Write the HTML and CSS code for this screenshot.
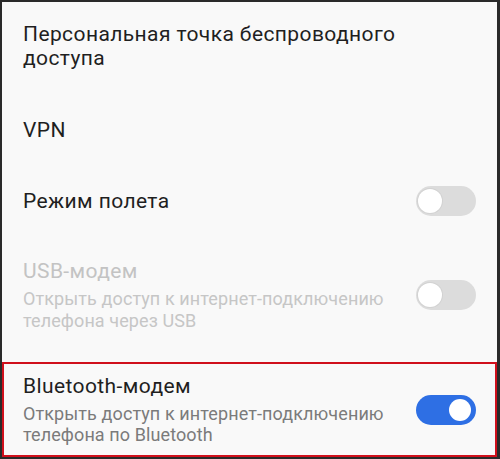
FILE: index.html
```html
<!DOCTYPE html>
<html lang="ru">
<head>
    <meta charset="UTF-8">
    <meta name="viewport" content="width=device-width, initial-scale=1.0">
    <title>Точка доступа и модем</title>
    <link rel="stylesheet" href="styles.css">
</head>
<body>
    <div class="screen">
        <div class="row row-first">
            <div class="text">
                <div class="title">Персональная точка беспроводного доступа</div>
            </div>
        </div>

        <div class="row row-vpn">
            <div class="text">
                <div class="title">VPN</div>
            </div>
        </div>

        <div class="row row-plane">
            <div class="text">
                <div class="title">Режим полета</div>
            </div>
            <div class="switch"><span class="knob"></span></div>
        </div>

        <div class="row row-usb disabled">
            <div class="text">
                <div class="title">USB-модем</div>
                <div class="subtitle">Открыть доступ к интернет-подключению телефона через USB</div>
            </div>
            <div class="switch"><span class="knob"></span></div>
        </div>

        <div class="row row-bt highlight">
            <div class="text">
                <div class="title">Bluetooth-модем</div>
                <div class="subtitle">Открыть доступ к интернет-подключению телефона по Bluetooth</div>
            </div>
            <div class="switch on"><span class="knob"></span></div>
        </div>
    </div>
</body>
</html>
```

FILE: styles.css
```css
html, body {
    margin: 0;
    padding: 0;
}

body {
    font-family: Roboto, "Noto Sans", Arial, sans-serif;
    background-color: #f9f9f9;
}

.screen {
    box-sizing: border-box;
    width: 500px;
    height: 459px;
    border: 2px solid #2a2a2a;
    border-right-width: 3px;
    background-color: #f9f9f9;
    display: flex;
    flex-direction: column;
    overflow: hidden;
}

.row {
    display: flex;
    align-items: center;
    justify-content: space-between;
    padding: 0 21px 0 21px;
}

.row-first { padding-top: 20px; padding-bottom: 24px; }
.row-vpn { padding-top: 24px; padding-bottom: 24px; }
.row-plane { padding-top: 20px; padding-bottom: 21px; }
.row-usb { padding-top: 22px; padding-bottom: 31px; }

.row-bt {
    flex: 1;
    padding-top: 8px;
    padding-bottom: 8px;
    padding-left: 19px;
    padding-right: 19px;
}

.highlight {
    border: 2px solid #d0101c;
}

.text {
    flex: 1;
    min-width: 0;
}

.title {
    font-size: 21px;
    line-height: 24px;
    letter-spacing: 0.4px;
    color: #1f1f1f;
    max-width: 390px;
}

.subtitle {
    font-size: 18px;
    line-height: 21.5px;
    letter-spacing: 0.1px;
    color: #7b7b7b;
    margin-top: 5px;
    max-width: 375px;
}

.disabled .title { color: #c3c3c3; }
.disabled .subtitle { color: #c6c6c6; }

.switch {
    position: relative;
    flex: none;
    width: 60px;
    height: 30px;
    border-radius: 15px;
    background-color: #dcdcdc;
}

.switch .knob {
    position: absolute;
    top: 3px;
    left: 2px;
    width: 24px;
    height: 24px;
    border-radius: 50%;
    background-color: #fff;
    box-shadow: 0 0 0 1px #d2d2d2;
}

.switch.on {
    background-color: #2e6fe4;
}

.switch.on .knob {
    top: 4px;
    left: auto;
    right: 5px;
    width: 22px;
    height: 22px;
    box-shadow: none;
}
```
